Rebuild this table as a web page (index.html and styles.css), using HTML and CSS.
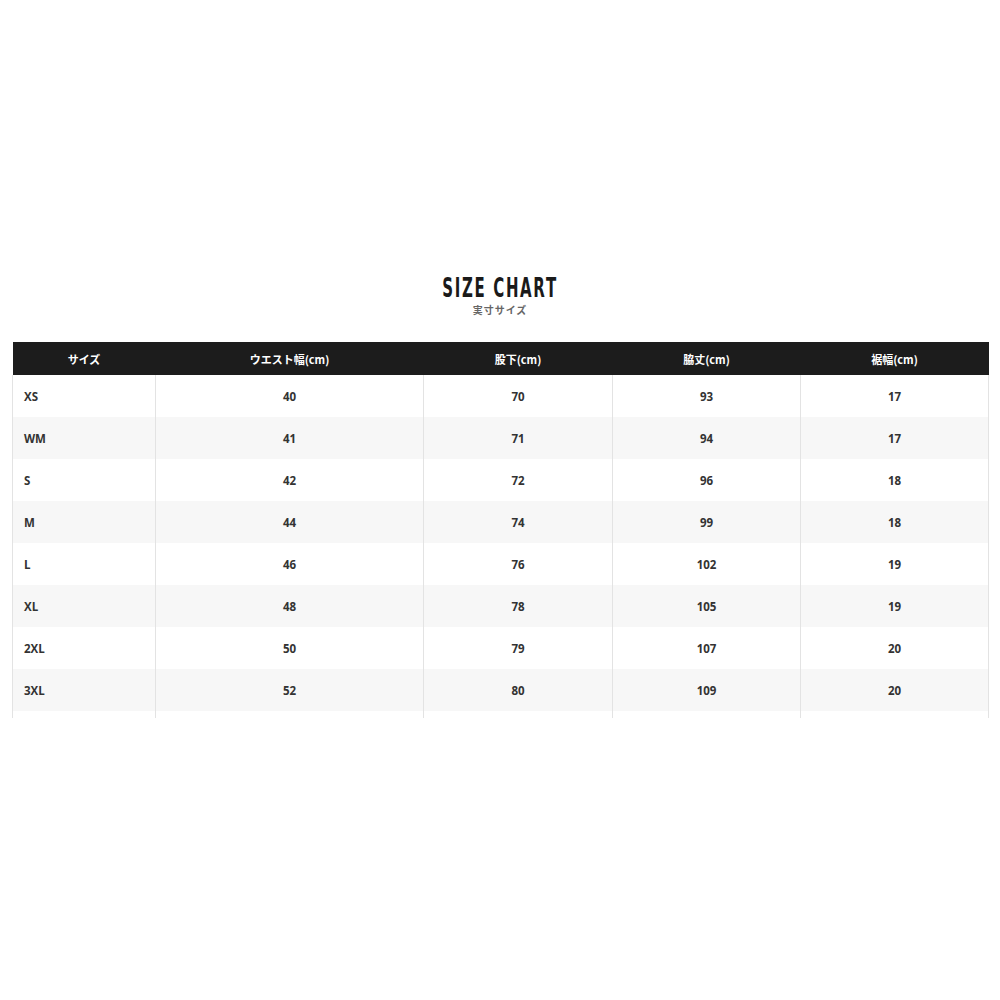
FILE: index.html
```html
<!DOCTYPE html>
<html lang="ja">
<head>
<meta charset="utf-8">
<title>SIZE CHART</title>
<link rel="stylesheet" href="styles.css">
</head>
<body>
<main class="page">
  <header class="heading">
    <h1 class="title">SIZE CHART</h1>
    <p class="subtitle">実寸サイズ</p>
  </header>
  <table class="chart">
    <colgroup>
      <col class="c1"><col class="c2"><col class="c3"><col class="c4"><col class="c5">
    </colgroup>
    <thead>
      <tr><th>サイズ</th><th>ウエスト幅(cm)</th><th>股下(cm)</th><th>脇丈(cm)</th><th>裾幅(cm)</th></tr>
    </thead>
    <tbody>
      <tr><td>XS</td><td>40</td><td>70</td><td>93</td><td>17</td></tr>
      <tr><td>WM</td><td>41</td><td>71</td><td>94</td><td>17</td></tr>
      <tr><td>S</td><td>42</td><td>72</td><td>96</td><td>18</td></tr>
      <tr><td>M</td><td>44</td><td>74</td><td>99</td><td>18</td></tr>
      <tr><td>L</td><td>46</td><td>76</td><td>102</td><td>19</td></tr>
      <tr><td>XL</td><td>48</td><td>78</td><td>105</td><td>19</td></tr>
      <tr><td>2XL</td><td>50</td><td>79</td><td>107</td><td>20</td></tr>
      <tr><td>3XL</td><td>52</td><td>80</td><td>109</td><td>20</td></tr>
      <tr class="tail"><td></td><td></td><td></td><td></td><td></td></tr>
    </tbody>
  </table>
</main>
</body>
</html>
```
FILE: styles.css
```css
html, body {
  margin: 0;
  padding: 0;
  background: #ffffff;
}
.page {
  padding: 273px 12px 0 12px;
}
.heading {
  text-align: center;
  margin-bottom: 26px;
}
.title {
  margin: 0;
  font-family: "DejaVu Sans", sans-serif;
  font-weight: 700;
  font-size: 27px;
  line-height: 30px;
  letter-spacing: 3px;
  color: #1a1a1a;
  transform: scaleX(0.555);
}
.subtitle {
  margin: 0;
  font-family: "Noto Sans CJK JP", sans-serif;
  font-weight: 700;
  font-size: 10px;
  line-height: 13px;
  letter-spacing: 1px;
  color: #666666;
}
.chart {
  width: 976px;
  margin-top: 2px;
  border-collapse: collapse;
  table-layout: fixed;
  font-family: "Open Sans", "Noto Sans CJK JP", sans-serif;
}
.c1 { width: 143px; }
.c2 { width: 268px; }
.c3 { width: 189px; }
.c4 { width: 188px; }
.c5 { width: 188px; }
.chart th {
  background: #1c1c1c;
  color: #ffffff;
  font-family: "Noto Sans CJK JP", sans-serif;
  font-weight: 700;
  font-size: 11px;
  height: 33px;
  padding: 0;
  text-align: center;
}
.chart td {
  height: 42px;
  padding: 0;
  text-align: center;
  font-size: 11.5px;
  font-weight: 700;
  color: #333333;
  border-left: 1px solid #e3e3e3;
  border-right: 1px solid #e3e3e3;
}
.chart td:first-child {
  text-align: left;
  padding-left: 11px;
}
.chart tbody tr:nth-child(even) td {
  background: #f7f7f7;
}
.chart tr.tail td {
  height: 7px;
  background: #ffffff;
}
```
